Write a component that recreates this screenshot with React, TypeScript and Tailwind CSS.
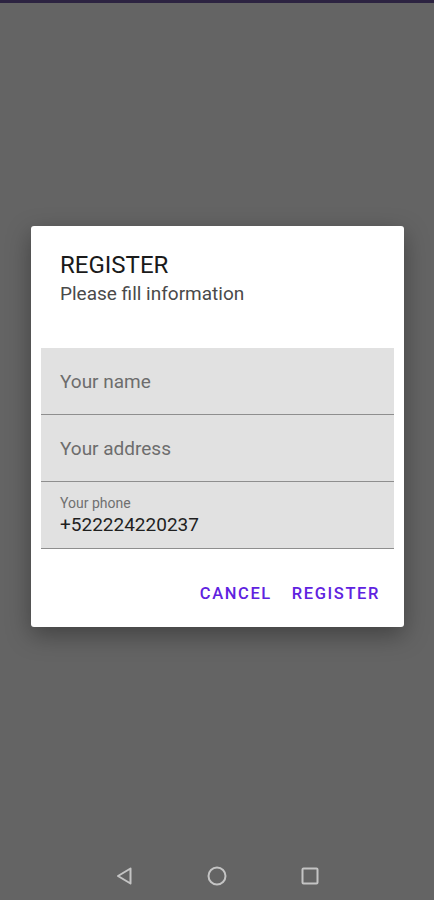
import React from "react";

function Field({ label }: { label: string }) {
  return (
    <div className="h-[67px] bg-[#e1e1e1] border-b border-[#8e8e8e] flex items-center pl-[19px] pt-[2px]">
      <span className="text-[19px] leading-[22px] text-[#6d6d6d]">{label}</span>
    </div>
  );
}

export default function App() {
  return (
    <div
      className="h-[900px] w-[434px] bg-[#646464] flex flex-col overflow-hidden"
      style={{ fontFamily: "Roboto, 'Noto Sans', sans-serif" }}
    >
      <div className="h-[3px] bg-[#2c2341] shrink-0" />
      <div className="mt-[223px] ml-[31px] w-[373px] bg-white rounded-[3px] shadow-[0_8px_24px_rgba(0,0,0,0.35)] flex flex-col">
        <div className="pt-[25px] px-[29px]">
          <div className="text-[24px] leading-[28px] text-[#1a1a1a]">REGISTER</div>
          <div className="mt-[4px] text-[19px] leading-[22px] text-[#4a4a4a]">Please fill information</div>
        </div>
        <div className="mt-[43px] mx-[10px] flex flex-col">
          <Field label="Your name" />
          <Field label="Your address" />
          <div className="h-[67px] bg-[#e1e1e1] border-b border-[#8e8e8e] flex flex-col pl-[19px] pt-[13px]">
            <span className="text-[14px] leading-[17px] text-[#707070]">Your phone</span>
            <span className="mt-[1px] text-[19px] leading-[24px] text-[#1f1f1f]">+522224220237</span>
          </div>
        </div>
        <div className="mt-[27px] mb-[15px] h-[36px] flex justify-end items-center gap-[20px] pr-[24px]">
          <span className="text-[16.5px] font-medium tracking-[1.6px] text-[#5f22e0]">CANCEL</span>
          <span className="text-[16.5px] font-medium tracking-[1.6px] text-[#5f22e0]">REGISTER</span>
        </div>
      </div>
      <div className="mt-auto h-[50px] flex items-center justify-center gap-[74px] pt-[2px]">
        <svg width="18" height="20" viewBox="0 0 18 20" className="shrink-0">
          <path d="M15.5 2.5 L3 10 L15.5 17.5 Z" fill="none" stroke="#c4c4c4" strokeWidth="2" strokeLinejoin="round" />
        </svg>
        <svg width="20" height="20" viewBox="0 0 20 20" className="shrink-0">
          <circle cx="10" cy="10" r="8.5" fill="none" stroke="#c4c4c4" strokeWidth="2" />
        </svg>
        <svg width="18" height="18" viewBox="0 0 18 18" className="shrink-0">
          <rect x="1.5" y="1.5" width="15" height="15" rx="1" fill="none" stroke="#c4c4c4" strokeWidth="2" />
        </svg>
      </div>
    </div>
  );
}
